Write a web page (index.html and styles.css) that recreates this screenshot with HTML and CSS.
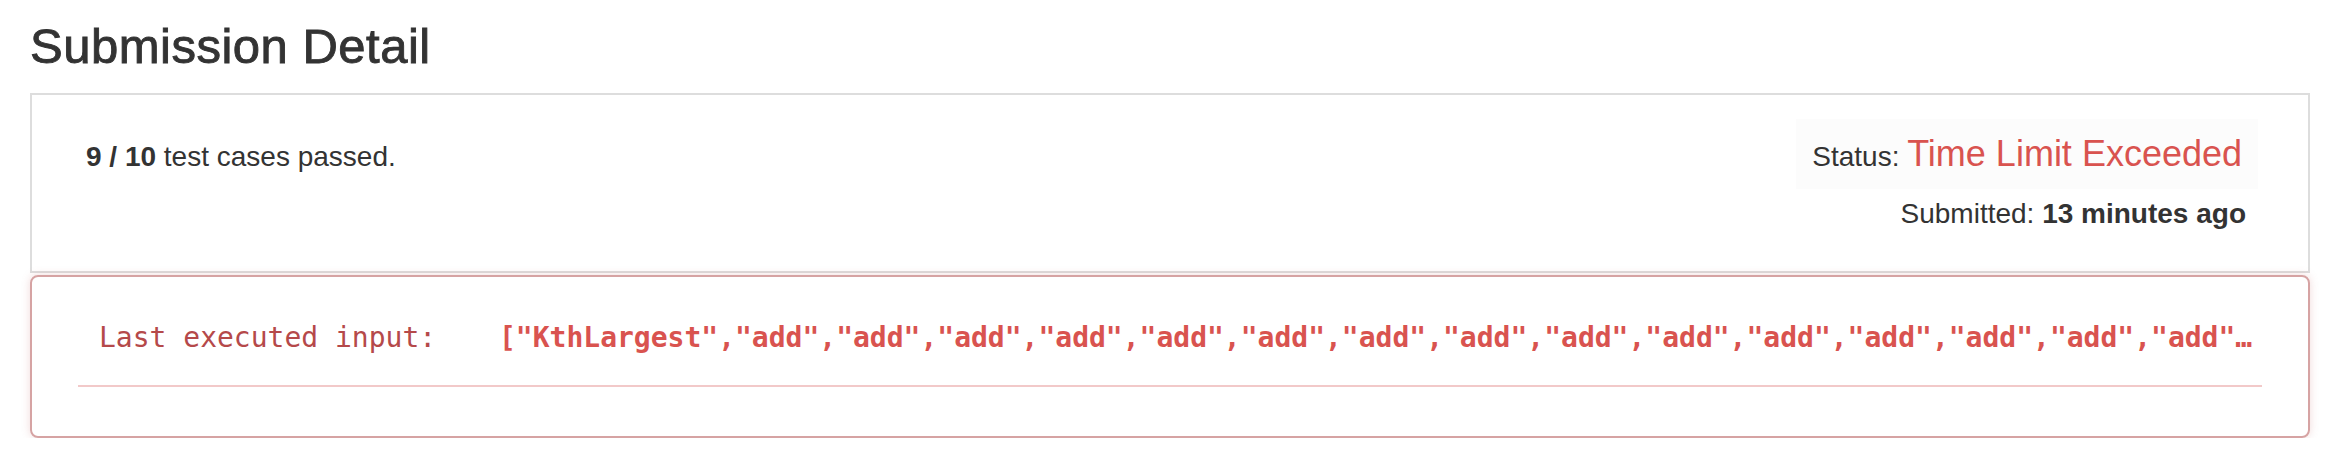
FILE: index.html
```html
<!DOCTYPE html>
<html lang="en">
<head>
<meta charset="utf-8">
<title>Submission Detail</title>
<link rel="stylesheet" href="styles.css">
</head>
<body>
<div class="page">
  <h3 class="title">Submission Detail</h3>
  <div class="summary">
    <div class="summary-left"><strong>9 / 10</strong> test cases passed.</div>
    <div class="summary-right">
      <div class="status-box">Status: <span class="status-value">Time Limit Exceeded</span></div>
      <div class="submitted">Submitted: <strong>13 minutes ago</strong></div>
    </div>
  </div>
  <div class="error-panel">
    <div class="error-row">
      <span class="error-label">Last executed input:</span>
      <span class="error-value">["KthLargest","add","add","add","add","add","add","add","add","add","add","add","add","add","add","add"…</span>
    </div>
    <div class="error-rule"></div>
  </div>
</div>
</body>
</html>
```
FILE: styles.css
```css
html, body {
  margin: 0;
  padding: 0;
  background: #ffffff;
}

body {
  font-family: "Liberation Sans", Arial, sans-serif;
  font-size: 28px;
  line-height: 40px;
  color: #333333;
}

.page {
  padding: 0 38px 0 30px;
}

.title {
  margin: 20px 0 20px;
  font-size: 49px;
  line-height: 52.8px;
  font-weight: 400;
  letter-spacing: 0.5px;
  -webkit-text-stroke: 0.9px #333333;
  color: #333333;
}

.summary {
  display: flex;
  justify-content: space-between;
  align-items: baseline;
  border: 2px solid #dddddd;
  padding: 24px 50px 37px 54px;
}

.summary-left strong {
  font-weight: 700;
}

.summary-right {
  text-align: right;
}

.status-box {
  background: #fcfcfc;
  padding: 15px 16px 12px 16px;
  margin-bottom: 5px;
}

.status-value {
  font-size: 36px;
  color: #d9534f;
}

.submitted {
  padding-right: 12px;
}

.submitted strong {
  font-weight: 700;
}

.error-panel {
  margin-top: 2px;
  border: 2px solid #d6a3a3;
  border-radius: 8px;
  box-shadow: 0 0 8px rgba(200, 110, 110, 0.25);
  padding: 41px 46px 49px;
}

.error-row {
  display: flex;
  padding-left: 21px;
  font-family: "DejaVu Sans Mono", "Liberation Mono", monospace;
  font-size: 28px;
  line-height: 40px;
  white-space: nowrap;
  overflow: hidden;
}

.error-label {
  flex: 0 0 400px;
  color: #b5494a;
}

.error-value {
  font-weight: 700;
  color: #d9534f;
}

.error-rule {
  margin-top: 27px;
  height: 2px;
  background: #f2c9c9;
}
```
